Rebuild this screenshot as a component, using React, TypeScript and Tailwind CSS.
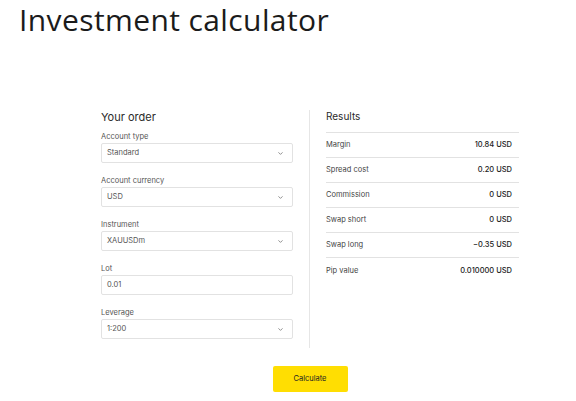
import { ChevronDown } from "lucide-react";

const fields = [
  { label: "Account type", value: "Standard", select: true },
  { label: "Account currency", value: "USD", select: true },
  { label: "Instrument", value: "XAUUSDm", select: true },
  { label: "Lot", value: "0.01", select: false },
  { label: "Leverage", value: "1:200", select: true },
];

const results = [
  ["Margin", "10.84 USD"],
  ["Spread cost", "0.20 USD"],
  ["Commission", "0 USD"],
  ["Swap short", "0 USD"],
  ["Swap long", "−0.35 USD"],
  ["Pip value", "0.010000 USD"],
];

export default function App() {
  return (
    <div className="w-[576px] h-[401px] bg-white font-['Inter',sans-serif] text-[#1d1d1d]">
      <h1 className="pl-[19px] pt-[2px] text-[30px] leading-[36px] font-normal tracking-[0.4px] text-[#1b1b1b] font-['Open_Sans',sans-serif]">
        Investment calculator
      </h1>

      <div className="ml-[101px] mt-[72px] w-[418px]">
        <div className="flex">
          <div className="w-[192px]">
            <h2 className="text-[11px] leading-[14px] text-[#2a2a2a]">Your order</h2>
            <div className="mt-[6px] flex flex-col gap-[11px]">
              {fields.map((f) => (
                <div key={f.label}>
                  <div className="pt-[2px] text-[7.5px] leading-[10px] text-[#555]">{f.label}</div>
                  <div className="mt-[1px] h-[20px] border border-[#e2e2e2] rounded-[2px] flex items-center justify-between pl-[5px] pr-[8px] text-[7.5px] text-[#555]">
                    <span>{f.value}</span>
                    {f.select && <ChevronDown size={7} strokeWidth={2.5} className="text-[#666]" />}
                  </div>
                </div>
              ))}
            </div>
          </div>

          <div className="mx-[16px] w-px bg-[#e6e6e6] h-[238px]" />

          <div className="flex-1">
            <h2 className="text-[10px] leading-[14px] text-[#2a2a2a] -mt-[1px]">Results</h2>
            <div className="mt-[9px] border-t border-[#e2e2e2]">
              {results.map(([k, v], i) => (
                <div
                  key={k}
                  className={`h-[25px] flex items-center justify-between pr-[7px] text-[7.5px] ${
                    i < results.length - 1 ? "border-b border-[#e2e2e2]" : ""
                  }`}
                >
                  <span className="text-[#444]">{k}</span>
                  <span className="text-[#222] font-medium">{v}</span>
                </div>
              ))}
            </div>
          </div>
        </div>

        <div className="flex justify-center mt-[18px]">
          <button className="w-[75px] h-[26px] bg-[#ffde02] rounded-[2px] text-[7.5px] text-[#222]">
            Calculate
          </button>
        </div>
      </div>
    </div>
  );
}
